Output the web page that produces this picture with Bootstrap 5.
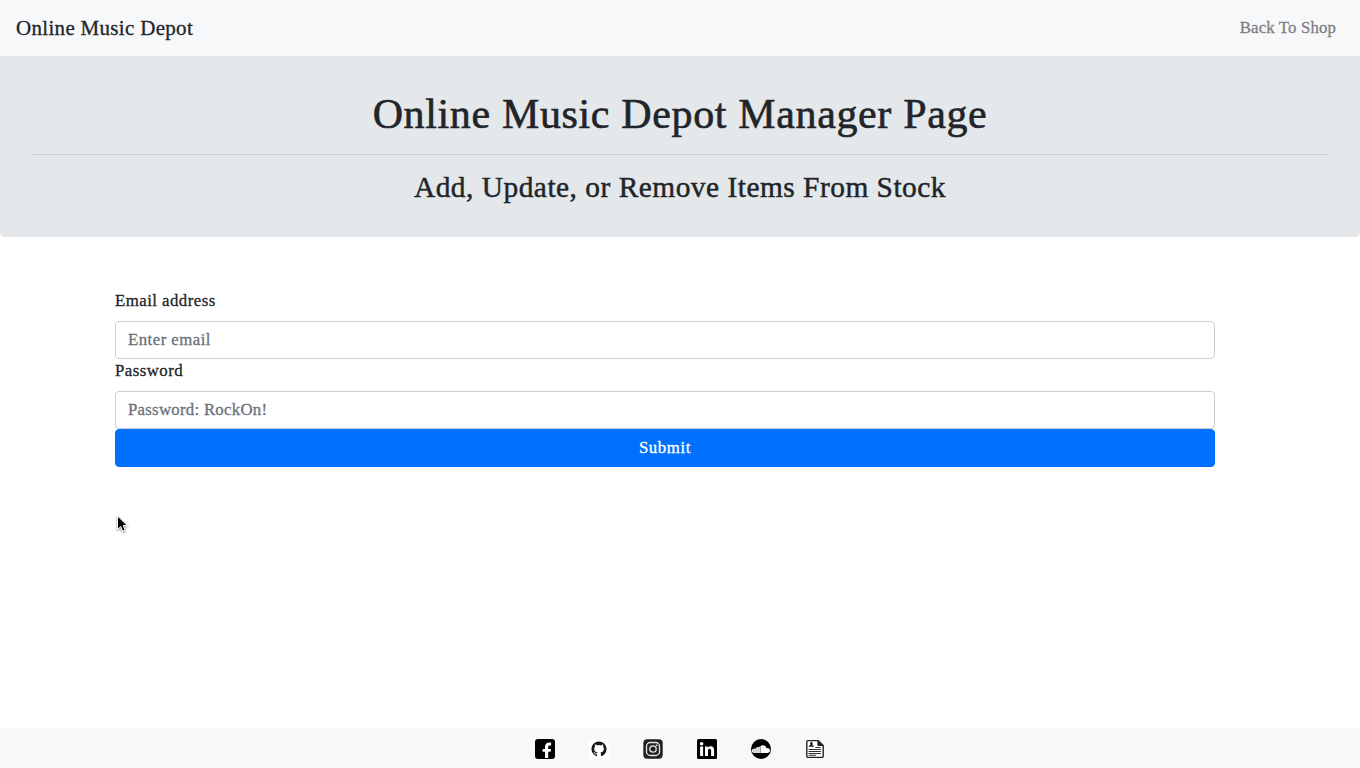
<!DOCTYPE html>
<html lang="en">
<head>
<meta charset="utf-8">
<meta name="viewport" content="width=device-width, initial-scale=1">
<title>Online Music Depot</title>
<link href="https://cdn.jsdelivr.net/npm/bootstrap@5.3.0/dist/css/bootstrap.min.css" rel="stylesheet">
<style>
  body { font-family: Georgia, "Liberation Serif", serif; font-size: 16.8px; line-height: 24px; letter-spacing: .47px; color: #212529; -webkit-text-stroke: .3px; }
  .site-bar { height: 56px; background: #f7f8fa; }
  .site-bar .navbar-brand { font-size: 21px; line-height: 30px; letter-spacing: .31px; color: #212529; }
  .site-bar .nav-link { color: #7f8081; letter-spacing: .14px; }
  .hero { background: #e4e8eb; border-radius: 0 0 5px 5px; height: 181px; }
  .hero h1 { font-size: 42px; line-height: 52px; margin-bottom: -2px; letter-spacing: .64px; font-weight: 400; -webkit-text-stroke: .6px; }
  .hero h2 { font-size: 29.4px; line-height: 32px; letter-spacing: .5px; font-weight: 400; -webkit-text-stroke: .45px; }
  .hero hr { border-top: 1px solid #cdd1d4; opacity: 1; }
  .login { width: 1100px; margin: 52px 0 0 115px; }
  .login .form-control { height: 38px; border-color: #c8ced6; border-radius: 4px; font-size: 16.8px; line-height: 24px; letter-spacing: .47px; padding: 6px 12px; -webkit-text-stroke: .3px; }
  .login .form-control::placeholder { color: #69727a; }
  #password::placeholder { letter-spacing: .27px; }
  .login .btn { height: 38px; background: #0070ff; border-color: #0070ff; border-radius: 4px; font-size: 16.8px; line-height: 24px; letter-spacing: .62px; -webkit-text-stroke: .3px; }
  .social { height: 40px; background: #f7f8fa; gap: 34px; padding-top: 11px; }
  .social a, .social svg { display: block; width: 20px; height: 20px; }
  .pointer { position: absolute; left: 115px; top: 514px; }
</style>
</head>
<body class="d-flex flex-column vh-100 overflow-hidden">
<nav class="navbar site-bar px-3 py-0 justify-content-between">
  <a class="navbar-brand m-0 p-0" href="#">Online Music Depot</a>
  <a class="nav-link px-2" href="#">Back To Shop</a>
</nav>
<header class="hero text-center px-4 py-4">
  <div class="p-2">
    <h1 class="mt-0">Online Music Depot Manager Page</h1>
    <hr class="my-3">
    <h2 class="m-0">Add, Update, or Remove Items From Stock</h2>
  </div>
</header>
<main class="flex-grow-1">
  <form class="login">
    <label class="d-block mb-2" for="email">Email address</label>
    <input class="form-control" type="email" id="email" placeholder="Enter email">
    <label class="d-block mb-2" for="password">Password</label>
    <input class="form-control" type="password" id="password" placeholder="Password: RockOn!">
    <button class="btn btn-primary w-100 d-block" type="button">Submit</button>
  </form>
</main>
<footer class="social d-flex justify-content-center flex-shrink-0">
  <a href="#" aria-label="Facebook"><svg viewBox="0 0 20 20"><rect width="20" height="20" rx="3"/><path fill="#fff" d="M10 19v-6.200H7.600V9.900H10V8c0-3 1.500-4.500 4.200-4.500h1.900v3h-1.400c-1.200 0-1.500.5-1.500 1.500v1.900h2.900l-.5 2.900h-2.400V19z"/></svg></a>
  <a href="#" aria-label="GitHub"><svg viewBox="0 0 20 20"><rect width="20" height="20" fill="#fff"/><g transform="translate(2.500 2.500) scale(.94)"><path fill="#191919" d="M8 0C3.58 0 0 3.58 0 8c0 3.54 2.29 6.53 5.47 7.59.4.07.55-.17.55-.38v-1.49c-2.01.37-2.53-.49-2.69-.94-.09-.23-.48-.94-.82-1.13-.28-.15-.68-.52-.01-.53.63-.01 1.08.58 1.23.82.72 1.21 1.87.87 2.33.66.07-.52.28-.87.51-1.07-1.78-.2-3.64-.89-3.64-3.95 0-.87.31-1.59.82-2.15-.08-.2-.36-1.02.08-2.12 0 0 .67-.21 2.200.82a7.400 7.400 0 0 1 4 0c1.530-1.040 2.200-.82 2.200-.82.44 1.100.16 1.920.08 2.120.51.56.82 1.270.82 2.150 0 3.070-1.870 3.750-3.650 3.950.29.25.54.73.54 1.480v2.200c0 .21.15.46.55.38A8 8 0 0 0 8 0z"/></g></svg></a>
  <a href="#" aria-label="Instagram"><svg viewBox="0 0 20 20"><rect x=".3" y=".3" width="19.4" height="19.4" rx="4" fill="#202020"/><g fill="none" stroke="#e8e8e8" stroke-width="1.300"><rect x="3.500" y="3.500" width="13" height="13" rx="3.800"/><circle cx="10" cy="10" r="3.200"/></g><circle cx="13.700" cy="6.300" r=".9" fill="#e8e8e8"/></svg></a>
  <a href="#" aria-label="LinkedIn"><svg viewBox="0 0 20 20"><rect width="20" height="20" rx="1.500"/><g fill="#fff"><circle cx="4.600" cy="4.700" r="1.800"/><path d="M3.100 7.600h3V17h-3zM8 7.600h2.800v1.300c.5-.9 1.500-1.600 2.900-1.600 2.700 0 3.400 1.700 3.400 4.300V17h-3v-4.800c0-1.300-.2-2.400-1.500-2.400S11 10.800 11 12.200V17H8z"/></g></svg></a>
  <a href="#" aria-label="SoundCloud"><svg viewBox="0 0 20 20"><circle cx="10" cy="10" r="10"/><path fill="#fff" d="M9.500 6.900c2.700-1.500 5.500-.2 6 2.300 1.800-.4 3.500.7 3.500 2.300s-1.100 2.500-2.500 2.500h-7z"/><path fill="#bbb" d="M.900 11.200q.2-1.200 1.600-1.500 1.100-.3 2.500-.3.500-1.300 1.800-1.300 1.300.2 2.700-1.200V14H2.500Q.900 13.500.900 11.200z"/><path stroke="#eee" stroke-width=".9" d="M1.500 10.500v2.800M3.200 9.700V14M4.900 9.400V14M6.600 8.200V14M8.300 7.800V14"/></svg></a>
  <a href="#" aria-label="Resume"><svg viewBox="0 0 20 20"><path fill="#fff" stroke="#202020" stroke-width="1.400" stroke-linejoin="round" d="M3 1.600h10l5.200 5V17.200q0 1.200-1.200 1.200H3q-1.200 0-1.200-1.200V2.800Q1.800 1.600 3 1.600z"/><path fill="#202020" d="M12.400 1.200v4.900q0 .8.800.8h5.100zM3.800 7.800c0-1.200.8-1.500 1.800-1.700-.9-1-.8-3.100.8-3.100s1.700 2.100.8 3.100c1 .2 1.800.5 1.800 1.700z"/><path stroke="#303030" stroke-width="1.100" stroke-linecap="round" d="M10.800 8.500h4.400M4 10.500h11.500M4 12.500h11.500M4 14.500h11.500M4 16.300h6.500"/></svg></a>
</footer>
<svg class="pointer" width="16" height="22" viewBox="0 0 16 22" aria-hidden="true"><path d="M2.500 2v13.500l3.200-3 2 4.700 2.500-1.100-2-4.500h4.200z" fill="#000" stroke="#fff" stroke-width="1" style="filter:drop-shadow(0 1px 1px #0007)"/></svg>
<script src="https://cdn.jsdelivr.net/npm/bootstrap@5.3.0/dist/js/bootstrap.bundle.min.js"></script>
</body>
</html>
